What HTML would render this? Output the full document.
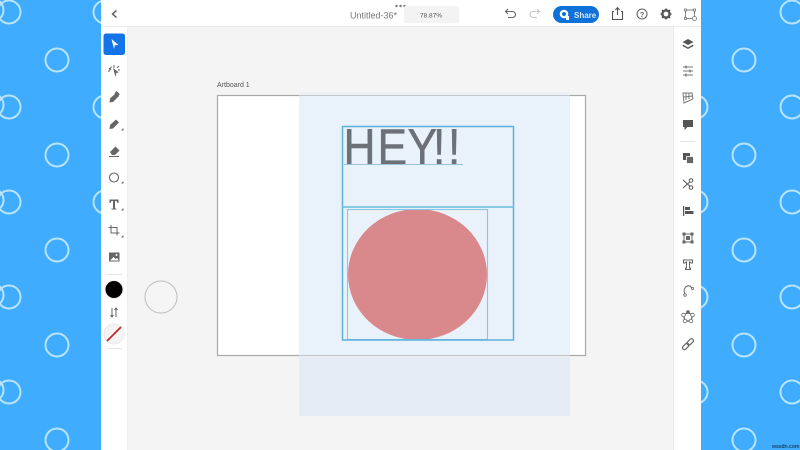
<!DOCTYPE html>
<html><head><meta charset="utf-8"><style>
html,body{margin:0;padding:0;width:800px;height:450px;overflow:hidden;background:#3facfd;font-family:"Liberation Sans",sans-serif}
svg{position:absolute;left:0;top:0;filter:blur(0.35px)}
</style></head><body>
<svg width="800" height="450" viewBox="0 0 800 450" xmlns="http://www.w3.org/2000/svg">
<rect x="-5" y="-5" width="810" height="460" fill="#3facfd"/>
<g fill="none" stroke="#b8e3fd" stroke-width="2">
<circle cx="9" cy="12" r="11.5"/><circle cx="-8" cy="10" r="11.5"/><circle cx="105" cy="12" r="11.5"/>
<circle cx="57" cy="60" r="11.5"/>
<circle cx="9" cy="107" r="11.5"/><circle cx="-8" cy="105" r="11.5"/><circle cx="105" cy="107" r="11.5"/>
<circle cx="57" cy="155" r="11.5"/>
<circle cx="9" cy="202" r="11.5"/><circle cx="-8" cy="200" r="11.5"/><circle cx="105" cy="202" r="11.5"/>
<circle cx="57" cy="250" r="11.5"/>
<circle cx="9" cy="297" r="11.5"/><circle cx="-8" cy="295" r="11.5"/>
<circle cx="57" cy="345" r="11.5"/>
<circle cx="9" cy="392" r="11.5"/><circle cx="-8" cy="390" r="11.5"/>
<circle cx="57" cy="440" r="11.5"/>
<circle cx="696" cy="107" r="11.5"/><circle cx="696" cy="202" r="11.5"/><circle cx="696" cy="297" r="11.5"/><circle cx="696" cy="392" r="11.5"/>
<circle cx="744" cy="60" r="11.5"/><circle cx="744" cy="155" r="11.5"/><circle cx="744" cy="250" r="11.5"/><circle cx="744" cy="345" r="11.5"/><circle cx="744" cy="440" r="11.5"/>
<circle cx="792" cy="12" r="11.5"/><circle cx="792" cy="107" r="11.5"/><circle cx="792" cy="202" r="11.5"/><circle cx="792" cy="297" r="11.5"/><circle cx="792" cy="392" r="11.5"/>
</g>
<!-- app -->
<rect x="101" y="0" width="600" height="450" fill="#fff"/>
<rect x="127" y="27" width="546" height="423" fill="#f4f4f4"/>
<rect x="127" y="27" width="1" height="423" fill="#eeeeee"/>
<rect x="673" y="27" width="1" height="423" fill="#ececec"/>
<rect x="101" y="26" width="600" height="1" fill="#ebebeb"/>
<!-- artboard -->
<text x="217" y="87" font-size="7" fill="#555">Artboard 1</text>
<rect x="217.500" y="95.500" width="368" height="260" fill="#fff" stroke="#a9a9a9" stroke-width="1.200"/>
<rect x="299" y="96" width="271" height="260" fill="#e9f1fb"/>
<rect x="299" y="92" width="271" height="3" fill="#edf0f5"/>
<rect x="299" y="357" width="271" height="59" fill="#e6ecf5"/>
<rect x="299" y="95" width="271" height="1" fill="#c3c6ca"/>
<rect x="299" y="355" width="271" height="1" fill="#c3c6ca"/>
<!-- content -->
<ellipse cx="417.500" cy="274.500" rx="69.500" ry="65.500" fill="#d9888c"/>
<text transform="translate(0 164.500) scale(.87 1)" x="394.800 433.900 468.400 497.700 514.900" y="0" font-size="51" fill="#6b7079" stroke="#6b7079" stroke-width="0.500">HEY!!</text>
<rect x="344" y="164" width="119" height="1" fill="#9cc4de"/>
<g fill="none">
<rect x="347.500" y="209.500" width="140" height="130" stroke="#86c8e2" stroke-width="1.100"/>
<rect x="342.500" y="126.500" width="171" height="213.500" stroke="#5bb1dc" stroke-width="1.500"/>
<path d="M342 207H514" stroke="#66bedd" stroke-width="1.500"/>
</g>
<circle cx="161" cy="297" r="16" fill="#f5f5f5" stroke="#bdbdbd" stroke-width="1"/>
<!-- top bar -->
<path d="M116.500 10.500L112.500 14L116.500 17.500" fill="none" stroke="#555" stroke-width="1.400"/>
<g fill="#777"><circle cx="396.500" cy="6" r="1.200"/><circle cx="400.500" cy="6" r="1.200"/><circle cx="404.500" cy="6" r="1.200"/></g>
<text x="350" y="18.500" font-size="9" fill="#777">Untitled-36*</text>
<rect x="404" y="6" width="55" height="17" rx="2" fill="#f3f3f3"/>
<text x="431" y="17.500" font-size="6.500" fill="#555" text-anchor="middle">78.87%</text>
<path d="M506 11.500H512.500a3 3 0 0 1 0 6H508M508 9L505.500 11.500L508 14" fill="none" stroke="#666" stroke-width="1.100"/>
<path d="M539 11.500H533a3 3 0 0 0 0 6H537M537 9L539.500 11.500L537 14" fill="none" stroke="#c6c6c6" stroke-width="1.100"/>
<rect x="553" y="6" width="46" height="17" rx="8.500" fill="#1071d8"/>
<circle cx="564" cy="14" r="4.300" fill="#fff"/><circle cx="564" cy="14" r="2" fill="#1071d8"/><rect x="566" y="16" width="3" height="4" fill="#fff"/>
<text x="574" y="18" font-size="8" font-weight="bold" fill="#d8e9fb">Share</text>
<path d="M614 11.500H612.500V19.500H622.500V11.500H621M617.500 15V8M615.300 10L617.500 7.700L619.700 10" fill="none" stroke="#555" stroke-width="1.100"/>
<circle cx="642" cy="14" r="5" fill="none" stroke="#666" stroke-width="1.100"/>
<text x="642" y="17" font-size="7.500" font-weight="bold" fill="#666" text-anchor="middle">?</text>
<circle cx="666" cy="14" r="3.600" fill="none" stroke="#555" stroke-width="2.400"/>
<path d="M666 8.500v2M666 17.500v2M660.500 14h2M669.500 14h2M662 10l1.500 1.500M668.500 16.500l1.500 1.500M662 18l1.500-1.500M668.500 11.500l1.500-1.500" stroke="#555" stroke-width="1.600"/>
<g fill="none" stroke="#777" stroke-width="0.900"><rect x="685.500" y="10" width="9" height="8.500"/></g>
<g fill="#fff" stroke="#777" stroke-width="0.800"><rect x="684.500" y="9" width="2" height="2"/><rect x="693.500" y="9" width="2" height="2"/><rect x="684.500" y="17.500" width="2" height="2"/><circle cx="694.500" cy="18.500" r="2"/></g>
<!-- left tools -->
<rect x="103.500" y="33.500" width="21.500" height="21.500" rx="2.500" fill="#1473e6"/>
<path d="M111.500 39L118.500 45L114.800 45.300L114 49Z" fill="#fff"/>
<g fill="#666">
<path d="M113 68L119 72.500L116.500 72.800L115.500 77Z"/>
<path d="M108.500 72L111.500 66.500M114 65V68M119 66L117 68M120 70H118M109 68L111 70" stroke="#666" stroke-width="1" fill="none"/>
<path d="M110 98.500L116 93L119 96L113 102L109.500 102.500Z"/><rect x="115" y="92" width="4.500" height="3" transform="rotate(45 117 93.500)"/>
<path d="M110 125L116 119.500L119 122.500L113 128.500L109.500 129Z"/><path d="M121 130.500h2.500v-2.500Z"/>
<path d="M110 152L115.500 146.500L119.500 150.500L115 155H112Z"/><path d="M109 156.500H119" stroke="#666" stroke-width="1" fill="none"/>
<path d="M121 183.500h2.500v-2.500Z"/>
<path d="M109.500 199.500H118.500V203H117.500L116.500 201H115V208.500H116.500V209.500H111.500V208.500H113V201H111.500L110.500 203H109.500Z"/><path d="M121 210.500h2.500v-2.500Z"/>
<path d="M121 237.500h2.500v-2.500Z"/>
<rect x="109" y="252.500" width="10.500" height="9"/>
</g>
<circle cx="114" cy="177.500" r="4.500" fill="none" stroke="#666" stroke-width="1.100"/>
<path d="M108.500 227.500H117V235.500M111 225V233H119.500" fill="none" stroke="#666" stroke-width="1"/>
<path d="M110 260.500L113.500 257L115.500 259L117 258L119 260.500Z" fill="#fff"/>
<circle cx="116.500" cy="255" r="1" fill="#fff"/>
<rect x="107" y="274" width="15" height="1" fill="#e4e4e4"/>
<circle cx="114" cy="289.500" r="9" fill="#000" stroke="#eee" stroke-width="1"/>
<path d="M112 308V317M110.500 315L112 317L113.500 315M116 317V308M114.500 310L116 308L117.500 310" fill="none" stroke="#666" stroke-width="1"/>
<circle cx="114" cy="334" r="10" fill="#f4f4f4" stroke="#eaeaea" stroke-width="1"/>
<path d="M107 341L121 327" stroke="#c7262a" stroke-width="1.800"/>
<rect x="107" y="348" width="15" height="1" fill="#e4e4e4"/>
<!-- right tools -->
<g fill="#555">
<path d="M688 39L693.500 42L688 45L682.500 42Z"/><path d="M683 44.500L688 47.500L693 44.500L693.500 46L688 49L682.500 46Z"/>
</g>
<g fill="none" stroke="#777" stroke-width="1">
<path d="M683 67H693M683 71H693M683 75H693"/>
<path d="M686 65.500v3M690 69.500v3M686 73.500v3" stroke-width="1.300"/>
<path d="M683 93H692L693 99L684 103ZM684 97L693 96M686 93.500V100M689 93.500V99"/>
</g>
<path d="M683 120H693V127H687.500L684.500 130V127H683Z" fill="#555"/>
<rect x="680" y="141" width="15" height="1" fill="#e2e2e2"/>
<g fill="#555"><rect x="683" y="153" width="7" height="7"/><rect x="686.500" y="156.500" width="7" height="7" fill="#666" stroke="#fff" stroke-width="0.800"/></g>
<path d="M683 180L692 188M683 188L692 180" stroke="#555" stroke-width="1"/>
<circle cx="691" cy="180.500" r="1.800" fill="#fff" stroke="#555"/><circle cx="691" cy="187.500" r="1.800" fill="#fff" stroke="#555"/>
<g fill="#555"><rect x="683" y="206" width="1.200" height="10"/><rect x="685" y="207" width="5" height="3"/><rect x="685" y="211" width="8.500" height="3"/></g>
<g fill="none" stroke="#666" stroke-width="1"><rect x="684" y="234" width="8" height="8"/></g>
<g fill="#666"><rect x="682.500" y="232.500" width="3" height="3"/><rect x="690.500" y="232.500" width="3" height="3"/><rect x="682.500" y="240.500" width="3" height="3"/><rect x="690.500" y="240.500" width="3" height="3"/><rect x="686" y="236" width="4" height="4"/></g>
<path d="M683.500 260H692.500V263H691L690 262H689.500V268H690.500V269.500H685.500V268H686.500V262H686L685 263H683.500Z" fill="#fff" stroke="#666" stroke-width="1"/>
<path d="M685 294C682.500 289 686 285 690 286L692 288" fill="none" stroke="#666" stroke-width="1"/>
<circle cx="685" cy="295" r="1.300" fill="#fff" stroke="#666" stroke-width="0.800"/><circle cx="692.500" cy="288.500" r="1.100" fill="#fff" stroke="#666" stroke-width="0.800"/>
<circle cx="688" cy="317" r="4" fill="none" stroke="#666" stroke-width="1.200"/>
<circle cx="688" cy="312" r="1.800" fill="#666"/><circle cx="692.500" cy="315" r="1.800" fill="#fff" stroke="#666" stroke-width="0.800"/><circle cx="683.500" cy="315" r="1.800" fill="#fff" stroke="#666" stroke-width="0.800"/><circle cx="691" cy="321" r="1.800" fill="#fff" stroke="#666" stroke-width="0.800"/><circle cx="685" cy="321" r="1.800" fill="#fff" stroke="#666" stroke-width="0.800"/>
<g fill="none" stroke="#666" stroke-width="1.200"><rect x="682" y="344.500" width="7.500" height="3.800" rx="1.900" transform="rotate(-45 685.750 346.400)"/><rect x="686.500" y="340" width="7.500" height="3.800" rx="1.900" transform="rotate(-45 690.250 341.900)"/></g>
<text x="772" y="448" font-size="5.500" fill="#0b1a2a">wsxdn.com</text>
</svg>
</body></html>
